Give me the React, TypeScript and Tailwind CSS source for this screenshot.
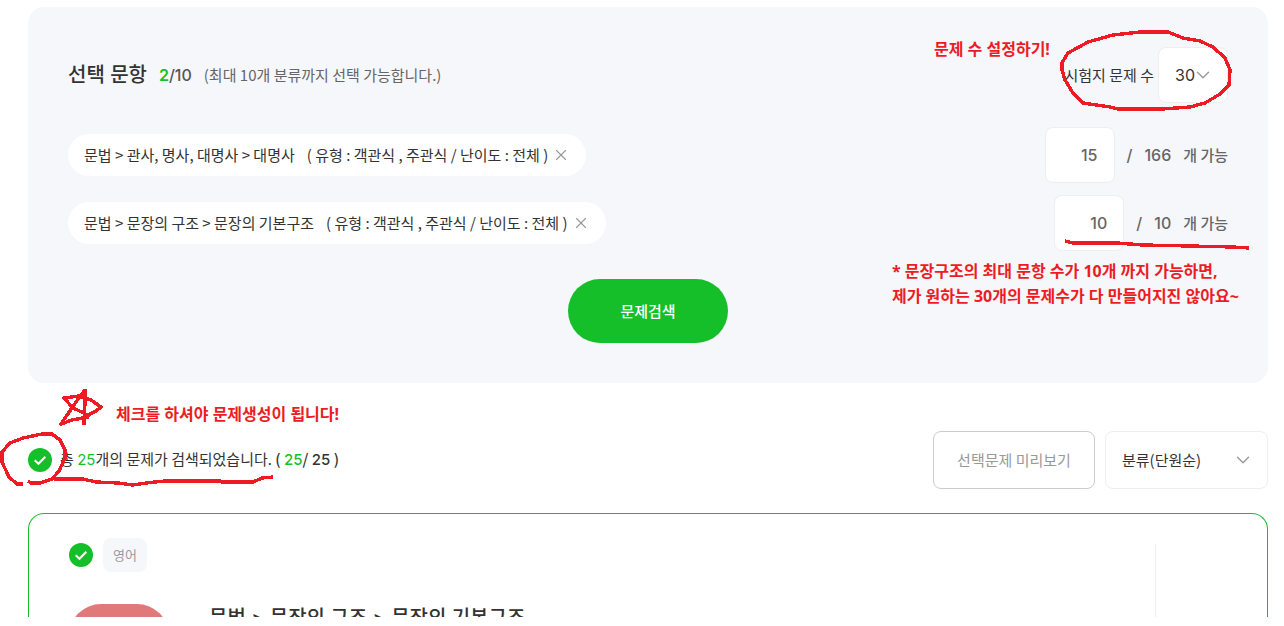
import { ChevronDown, X } from 'lucide-react'

const categories = [
  { id: 1, path: '문법 > 관사, 명사, 대명사 > 대명사', option: '( 유형 : 객관식 , 주관식 / 난이도 : 전체 )', count: 15, max: 166 },
  { id: 2, path: '문법 > 문장의 구조 > 문장의 기본구조', option: '( 유형 : 객관식 , 주관식 / 난이도 : 전체 )', count: 10, max: 10 },
]

function CheckCircle({ label }: { label: string }) {
  return (
    <label className="relative block size-6 shrink-0 cursor-pointer">
      <input type="checkbox" defaultChecked aria-label={label} className="block size-6 appearance-none rounded-full bg-[#15bf29]" />
      <svg viewBox="0 0 24 24" className="pointer-events-none absolute inset-0 size-6" fill="none" stroke="#fff" strokeWidth="2">
        <path d="M6.7 12.2l3.8 3.6L17.3 8.8" />
      </svg>
    </label>
  )
}

function CategoryRow({ item }: { item: (typeof categories)[number] }) {
  return (
    <li className="flex items-center justify-between">
      <div className="flex h-[42px] items-center rounded-full bg-white px-4 text-[15px] leading-5 text-[#333]">
        <span>{item.path}</span>
        <span className="ml-3">{item.option}</span>
        <button type="button" aria-label="삭제" className="ml-1 text-[#999]">
          <X size={18} strokeWidth={1.5} />
        </button>
      </div>
      <div className="flex items-center text-[15px] font-medium text-[#666]">
        <input
          type="text"
          aria-label="문제 수"
          defaultValue={item.count}
          className="h-14 w-[70px] rounded-lg border border-[#eee] bg-white pr-4 text-right font-[Inter,sans-serif] text-base"
        />
        <span className="ml-3 font-[Inter,sans-serif] text-base">/</span>
        <span className="ml-3 font-[Inter,sans-serif] text-base">{item.max}</span>
        <span className="ml-3">개 가능</span>
      </div>
    </li>
  )
}

function SearchPanel() {
  return (
    <section className="rounded-2xl bg-[#f5f7fb] p-10">
      <div className="flex items-center justify-between">
        <div className="flex items-center">
          <h2 className="font-[Inter,'Noto_Sans_CJK_KR',sans-serif] text-xl font-medium text-[#333]">선택 문항</h2>
          <p className="ml-3 font-[Inter,sans-serif] text-base font-medium text-[#555]">
            <span className="font-semibold text-[#15bf29]">2</span>/10
          </p>
          <p className="ml-3 text-[15px] text-[#666]">(최대 10개 분류까지 선택 가능합니다.)</p>
        </div>
        <div className="flex items-center">
          <label htmlFor="total" className="text-[15px] text-[#333]">시험지 문제 수</label>
          <div className="relative ml-1">
            <select
              id="total"
              className="h-14 w-[70px] appearance-none rounded-lg border border-[#eee] bg-white pl-4 font-[Inter,sans-serif] text-base text-[#333]"
            >
              <option>30</option>
            </select>
            <ChevronDown size={22} strokeWidth={1.5} className="pointer-events-none absolute top-[17px] right-3.5 text-[#999]" />
          </div>
        </div>
      </div>
      <ul className="mt-6 flex flex-col gap-3">
        {categories.map((item) => (
          <CategoryRow key={item.id} item={item} />
        ))}
      </ul>
      <button type="button" className="mx-auto mt-7 block h-16 w-40 rounded-[32px] bg-[#15bf29] text-[15px] font-medium text-white">
        문제검색
      </button>
    </section>
  )
}

function ResultBar() {
  return (
    <div className="mt-12 flex items-center justify-between">
      <div className="flex items-center gap-2">
        <CheckCircle label="전체 선택" />
        <p className="text-[15px] text-[#333]">
          총 <span className="font-[Inter,sans-serif] text-[#15bf29]">25</span>개의 문제가 검색되었습니다.{' '}
          <span className="font-medium">
            ( <span className="font-[Inter,sans-serif] text-[#15bf29]">25</span>/{' '}
            <span className="font-[Inter,sans-serif]">25</span> )
          </span>
        </p>
      </div>
      <div className="flex gap-2.5">
        <button type="button" className="h-[58px] w-[162px] rounded-lg border border-[#ccc] bg-white text-[15px] text-[#999]">
          선택문제 미리보기
        </button>
        <div className="relative">
          <select
            aria-label="정렬"
            className="h-[58px] w-[163px] appearance-none rounded-lg border border-[#eee] bg-white pl-4 text-[15px] text-[#333]"
          >
            <option>분류(단원순)</option>
          </select>
          <ChevronDown size={22} strokeWidth={1.5} className="pointer-events-none absolute top-[18px] right-3.5 text-[#999]" />
        </div>
      </div>
    </div>
  )
}

function QuestionCard() {
  return (
    <article className="mt-6 flex max-h-[104px] justify-between overflow-hidden rounded-t-2xl border border-b-0 border-[#15bf29] pl-10">
      <div className="pt-6">
        <div className="flex items-center gap-2.5">
          <CheckCircle label="문제 선택" />
          <span className="flex h-[34px] items-center rounded-lg bg-[#f5f7fb] px-2.5 text-[13px] text-[#999]">영어</span>
        </div>
        <div className="mt-8 flex gap-10">
          <div className="h-16 w-[100px] shrink-0 rounded-[32px] bg-[#e07a7a]" />
          <h3 className="font-[Inter,'Noto_Sans_CJK_KR',sans-serif] text-xl font-medium text-[#333]">
            문법 &gt; 문장의 구조 &gt; 문장의 기본구조
          </h3>
        </div>
      </div>
      <div className="mt-[30px] w-28 border-l border-[#eee]" />
    </article>
  )
}

// Hand-written notes lying over the page
function Notes() {
  return (
    <div className="pointer-events-none font-['Noto_Sans','Noto_Sans_CJK_KR',sans-serif] text-base font-bold whitespace-nowrap text-[#ed1c24]">
      <p className="absolute top-[37px] left-[934px]">문제 수 설정하기!</p>
      <p className="absolute top-[259px] left-[892px] leading-[25px]">
        * 문장구조의 최대 문항 수가 10개 까지 가능하면,
        <br />
        제가 원하는 30개의 문제수가 다 만들어지진 않아요~
      </p>
      <p className="absolute top-[402px] left-[116px]">체크를 하셔야 문제생성이 됩니다!</p>
      <svg
        width="1284"
        height="626"
        className="absolute top-0 left-0"
        fill="none"
        stroke="#ed1c24"
        strokeWidth="3.4"
        strokeLinejoin="round"
        shapeRendering="crispEdges"
      >
        <path d="M1062 63L1068 53L1088 42L1113 35L1140 32L1168 32L1183 38L1200 41L1213 47L1225 58L1230 70L1229 85L1220 94L1205 103L1190 107L1162 109L1118 109L1110 107L1083 103L1073 93L1065 80L1062 70Z" />
        <path d="M1065 241L1073 243L1117 243L1143 245L1190 246L1233 247L1249 248" />
        <path d="M23 484L17 484L9 477L2 462L2 452L10 443L23 438L42 434L52 434L60 440L65 450L65 458L59 471L52 479L40 483L31 483L28 481" />
        <path d="M54 479L83 479L96 482L118 483L133 485L146 483L165 481L220 481L222 482L253 482L262 478L273 477" />
        <path d="M85 389L85 402L84 425M84 391L76 402L61 424L72 420L89 417M89 418L84 413L73 408L64 398L79 396L91 400L101 407L96 411L82 418" />
      </svg>
    </div>
  )
}

export default function App() {
  return (
    <div className="relative min-h-screen overflow-hidden bg-white font-['Noto_Sans_CJK_KR',sans-serif]">
      <main className="pt-[7px] pr-4 pb-2 pl-7">
        <SearchPanel />
        <ResultBar />
        <QuestionCard />
      </main>
      <Notes />
    </div>
  )
}
